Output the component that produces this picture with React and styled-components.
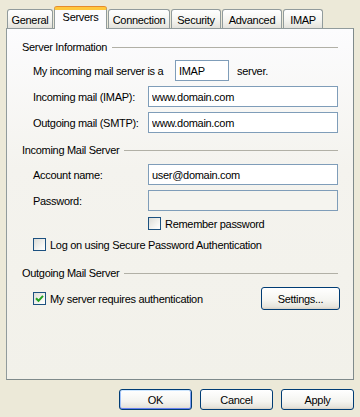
import React from 'react';
import styled, { createGlobalStyle, css } from 'styled-components';

const GlobalStyle = createGlobalStyle`
  html, body {
    margin: 0;
    padding: 0;
    background: #ece9d8;
  }
  body {
    font-family: "Liberation Sans", Arial, sans-serif;
    font-size: 11px;
    letter-spacing: -0.3px;
    color: #000;
  }
`;

const tabs = [
  { label: 'General', width: 46 },
  { label: 'Servers', width: 53, active: true },
  { label: 'Connection', width: 62 },
  { label: 'Security', width: 50 },
  { label: 'Advanced', width: 60 },
  { label: 'IMAP', width: 40 },
];

const Window = styled.div`
  width: 360px;
  height: 417px;
  box-sizing: border-box;
  padding: 7px 6px 0 6px;
  display: flex;
  flex-direction: column;
`;

const TabStrip = styled.div`
  display: flex;
  align-items: flex-end;
  gap: 1px;
  height: 21px;
  padding-left: 1px;
  position: relative;
  z-index: 1;
`;

const Tab = styled.div`
  box-sizing: border-box;
  width: ${(p) => p.$width}px;
  height: 19px;
  border: 1px solid #919b9c;
  border-bottom: none;
  border-radius: 3px 3px 0 0;
  background: linear-gradient(#ffffff, #f3f3ef 60%, #e3e2dc);
  display: flex;
  align-items: center;
  justify-content: center;
  padding-top: 1px;
  ${(p) =>
    p.$active &&
    css`
      height: 22px;
      margin-bottom: -1px;
      border-top: 3px solid #ffc83c;
      box-shadow: 0 -1px 0 #e68b2c;
      border-color: #ffc83c #919b9c;
      background: #fcfcfe;
      align-items: flex-start;
      padding-top: 1px;
    `}
`;

const Panel = styled.div`
  box-sizing: border-box;
  height: 352px;
  border: 1px solid #919b9c;
  border-right-color: #7f8a8b;
  border-bottom-color: #7f8a8b;
  background: linear-gradient(#fcfcfe, #f4f3ee 40%, #f2f1ea);
  padding: 11px 15px 0 15px;
  display: flex;
  flex-direction: column;
`;

const GroupHeader = styled.div`
  display: flex;
  align-items: center;
  height: 14px;
  line-height: 14px;
  margin-top: ${(p) => p.$mt || 0}px;
`;

const Rule = styled.div`
  flex: 1;
  height: 1px;
  margin-left: 5px;
  background: #b1b0a6;
`;

const Row = styled.div`
  display: flex;
  align-items: center;
  height: ${(p) => p.$h || 21}px;
  margin-top: ${(p) => p.$mt || 0}px;
  padding-left: ${(p) => p.$indent ?? 11}px;
`;

const Label = styled.span`
  width: ${(p) => p.$width || 115}px;
  flex: none;
  white-space: nowrap;
`;

const Field = styled.input`
  box-sizing: border-box;
  width: ${(p) => p.$width || 191}px;
  height: 21px;
  margin: 0;
  padding: 0 3px;
  border: 1px solid #7f9db9;
  background: ${(p) => (p.$disabled ? '#f5f4ef' : '#fff')};
  font: inherit;
  letter-spacing: inherit;
  color: #000;
  outline: none;
`;

const Suffix = styled.span`
  margin-left: 8px;
`;

const Check = styled.span`
  box-sizing: border-box;
  width: 13px;
  height: 13px;
  flex: none;
  border: 1px solid #1c5180;
  background: linear-gradient(135deg, #dcdcd7, #f7f7f4 70%, #ffffff);
  display: flex;
  align-items: center;
  justify-content: center;
  margin-right: 4px;
`;

const Button = styled.button`
  box-sizing: border-box;
  width: ${(p) => p.$width || 73}px;
  height: ${(p) => p.$height || 21}px;
  margin: 0;
  padding: 0;
  border: 1px solid #003c74;
  border-radius: 3px;
  background: linear-gradient(#ffffff, #f4f4f0 60%, #e6e4dc 90%, #d6d0c5);
  font: inherit;
  letter-spacing: inherit;
  color: #000;
  ${(p) =>
    p.$default &&
    css`
      box-shadow: inset 0 1px 0 #cee7ff, inset 0 -1px 0 #6982ee,
        inset 1px 0 0 #9fc1f9, inset -1px 0 0 #7a9bf1;
    `}
`;

const SettingsButton = styled(Button)`
  margin-left: auto;
  margin-right: -2px;
`;

const Footer = styled.div`
  display: flex;
  justify-content: flex-end;
  gap: 8px;
  margin-top: 9px;
`;

const Checkbox = ({ checked }) => (
  <Check>
    {checked && (
      <svg width="9" height="9" viewBox="0 0 9 9">
        <path d="M1 4.2 L3.5 6.8 L8 1.8" fill="none" stroke="#21a121" strokeWidth="2" />
      </svg>
    )}
  </Check>
);

const App = () => (
  <Window>
    <GlobalStyle />
    <TabStrip>
      {tabs.map((t) => (
        <Tab key={t.label} $width={t.width} $active={t.active}>
          {t.label}
        </Tab>
      ))}
    </TabStrip>
    <Panel>
      <GroupHeader>
        Server Information
        <Rule />
      </GroupHeader>
      <Row $mt={6}>
        <Label $width={142}>My incoming mail server is a</Label>
        <Field $width={54} defaultValue="IMAP" readOnly />
        <Suffix>server.</Suffix>
      </Row>
      <Row $mt={5}>
        <Label>Incoming mail (IMAP):</Label>
        <Field defaultValue="www.domain.com" readOnly />
      </Row>
      <Row $mt={5}>
        <Label>Outgoing mail (SMTP):</Label>
        <Field defaultValue="www.domain.com" readOnly />
      </Row>

      <GroupHeader $mt={10}>
        Incoming Mail Server
        <Rule />
      </GroupHeader>
      <Row $mt={7}>
        <Label>Account name:</Label>
        <Field defaultValue="user@domain.com" readOnly />
      </Row>
      <Row $mt={5}>
        <Label>Password:</Label>
        <Field type="password" $disabled readOnly />
      </Row>
      <Row $mt={6} $h={13} $indent={126}>
        <Checkbox />
        Remember password
      </Row>
      <Row $mt={8} $h={13}>
        <Checkbox />
        Log on using Secure Password Authentication
      </Row>

      <GroupHeader $mt={15}>
        Outgoing Mail Server
        <Rule />
      </GroupHeader>
      <Row $mt={7} $h={23}>
        <Checkbox checked />
        My server requires authentication
        <SettingsButton $width={79} $height={23}>
          Settings...
        </SettingsButton>
      </Row>
    </Panel>
    <Footer>
      <Button $default>OK</Button>
      <Button>Cancel</Button>
      <Button>Apply</Button>
    </Footer>
  </Window>
);

export default App;
